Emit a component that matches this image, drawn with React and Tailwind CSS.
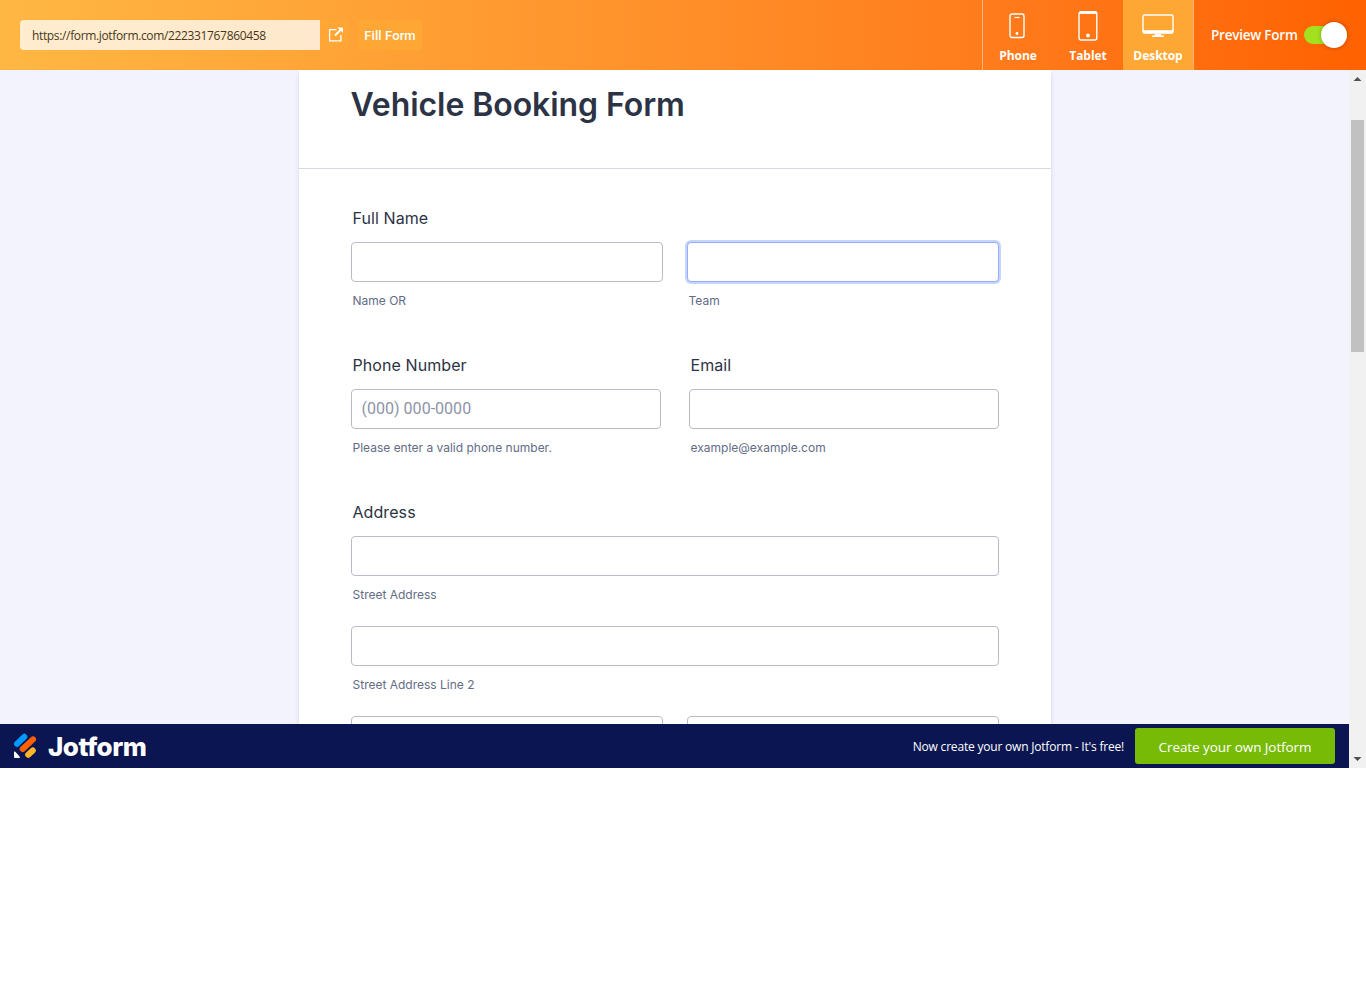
import React from "react";

function Field({ width, sub, placeholder, focused }) {
  return (
    <div className={width}>
      <div
        className={
          "flex h-10 items-center rounded-[4px] border bg-white px-[10px] text-base text-[#8d94a8] " +
          (focused
            ? "border-[#91aeff] ring-2 ring-[#c7d5fe]"
            : "border-[#b8bbcc]")
        }
      >
        {placeholder && <span className="font-['Roboto',sans-serif] tracking-[0.02px]">{placeholder}</span>}
      </div>
      <div className="mt-[11px] flex h-4 items-center pl-[2px] text-[12px] leading-4 text-[#626c87]">{sub}</div>
    </div>
  );
}

function Label({ children }) {
  return <div className="mb-3 flex h-6 items-center pl-[2px] text-base leading-6 tracking-[0.08px] text-[#2c3345]">{children}</div>;
}

function Device({ label, active, children }) {
  return (
    <div className={"flex h-full flex-col items-center text-white " + (active ? "w-[70px] bg-[#ffa734]" : "w-[70px]")}>
      <div className="flex h-[52px] w-full items-center justify-center">{children}</div>
      <span className="-mt-[4px] text-[12px] font-bold leading-4 tracking-[-0.04px] whitespace-nowrap">{label}</span>
    </div>
  );
}

function Header() {
  return (
    <header className="flex h-[70px] w-full shrink-0 items-center bg-linear-to-r from-[#ffb743] to-[#ff6100] pl-5 font-['Open_Sans',sans-serif]">
      <div className="flex h-[30px] w-[300px] items-center rounded-l-[4px] bg-white/75 pl-3 text-[12px] tracking-[-0.35px] text-[#473619]">
        <span className="pt-px">https://form.jotform.com/222331767860458</span>
      </div>
      <div className="flex h-[30px] w-[30px] items-center justify-center bg-[#ffa734]/50">
        <svg width="16" height="16" viewBox="0 0 16 16" fill="none" className="ml-px">
          <path d="M8.5 2.6H1.6v11.3h11.3V8" stroke="#fff" strokeWidth="1.3" />
          <path d="M7 8.5 12.5 3" stroke="#fff" strokeWidth="2" />
          <path d="M9.5.4H15v5.5z" fill="#fff" />
        </svg>
      </div>
      <div className="ml-2 flex h-[30px] w-16 items-center justify-center rounded-[2px] bg-[#ffa734] pt-px font-['Roboto',sans-serif] text-[13px] font-medium tracking-[0.1px] whitespace-nowrap text-white">
        Fill Form
      </div>
      <nav className="ml-auto flex h-full border-x border-white/45">
        <Device label="Phone">
          <svg width="16" height="26" viewBox="0 0 16 26" fill="none" stroke="#fff" className="mr-[2px]">
            <rect x="1" y="1" width="14" height="23.5" rx="2" strokeWidth="1.4" />
            <path d="M5.5 4.5h5" strokeWidth="1.2" />
            <circle cx="8" cy="20.5" r="1.4" fill="#fff" stroke="none" />
          </svg>
        </Device>
        <Device label="Tablet">
          <svg width="20" height="30" viewBox="0 0 20 30" fill="none" stroke="#fff">
            <rect x="1" y="0.8" width="17.8" height="28.2" rx="2" strokeWidth="1.4" />
            <path d="M1.5 1.8h17" strokeWidth="2.2" />
            <circle cx="10" cy="24.5" r="1.9" fill="#fff" stroke="none" />
          </svg>
        </Device>
        <Device label="Desktop" active>
          <svg width="32" height="24" viewBox="0 0 32 24" fill="none" stroke="#fff" className="mr-px">
            <rect x="1" y="1" width="30" height="18" rx="1.5" strokeWidth="1.4" />
            <path d="M1 17.7h30" strokeWidth="3" />
            <path d="M13 20h6l.6 1.5H22v1.4H10v-1.4h2.4z" fill="#fff" stroke="none" />
          </svg>
        </Device>
      </nav>
      <div className="flex h-full w-[172px] items-center pl-[17px] text-[13.5px] font-semibold tracking-[-0.23px] whitespace-nowrap text-white">
        <span className="w-[93px]">Preview Form</span>
        <div className="flex h-[18px] w-[43px] items-center justify-end rounded-full bg-[#a3e120]">
          <div className="size-[26px] shrink-0 rounded-full bg-white shadow-[0_0_4px_rgba(0,0,0,.3)]" />
        </div>
      </div>
    </header>
  );
}

function Form() {
  return (
    <main className="flex min-h-0 flex-1 justify-center overflow-hidden bg-[#f3f3fe] font-['Inter',sans-serif]">
      <div className="h-[800px] w-[752px] shrink-0 bg-white shadow-[0_4px_4px_rgba(87,100,126,.21)]">
        <div className="h-[99px] border-b border-[#d7d8e1] pl-[52px] pt-[15px]">
          <h1 className="text-[32px] font-semibold leading-[40px] tracking-[-0.07px] text-[#2c3345]">Vehicle Booking Form</h1>
        </div>
        <div className="px-[52px] pt-[37px]">
          <Label>Full Name</Label>
          <div className="flex justify-between">
            <Field width="w-[312px]" sub="Name OR" />
            <Field width="w-[312px]" sub="Team" focused />
          </div>
          <div className="mt-11 flex justify-between">
            <div>
              <Label>Phone Number</Label>
              <Field width="w-[310px]" placeholder="(000) 000-0000" sub="Please enter a valid phone number." />
            </div>
            <div>
              <Label>Email</Label>
              <Field width="w-[310px]" sub="example@example.com" />
            </div>
          </div>
          <div className="mt-11">
            <Label>Address</Label>
            <Field width="w-full" sub="Street Address" />
            <div className="mt-[23px]">
              <Field width="w-full" sub="Street Address Line 2" />
            </div>
            <div className="mt-[23px] flex justify-between">
              <Field width="w-[312px]" />
              <Field width="w-[312px]" />
            </div>
          </div>
        </div>
      </div>
    </main>
  );
}

function Footer() {
  return (
    <footer className="flex h-11 shrink-0 items-center bg-[#0a1551] pl-[13px] pr-[14px] text-white font-['Open_Sans',sans-serif]">
      <svg width="24" height="26" viewBox="0 0 24 26" fill="none" strokeLinecap="round" strokeWidth="6">
        <path d="M4 10.8 11.3 3.8" stroke="#0099ff" />
        <path d="M9.7 16 20 6.4" stroke="#ff6100" />
        <path d="M15.2 21.8 19.8 17.5" stroke="#ffb629" />
        <path d="M1 19.2v4.2c0 1 .5 1.6 1.6 1.6h3.5c1 0 1.2-.7.5-1.4L2.3 18.8c-.7-.7-1.3-.4-1.3.4z" fill="#fff" />
      </svg>
      <span className="ml-[11px] pt-[2px] font-['Inter',sans-serif] text-[26px] font-extrabold leading-8 tracking-[-0.5px]">Jotform</span>
      <span className="ml-auto pt-[2px] text-[12px] font-medium tracking-[-0.2px] whitespace-nowrap">Now create your own Jotform - It's free!</span>
      <button className="ml-[11px] flex h-9 w-[200px] items-center justify-center rounded-[3px] bg-[#78bb07] pt-[2px] text-[13.5px] font-medium tracking-[-0.08px] whitespace-nowrap">
        Create your own Jotform
      </button>
    </footer>
  );
}

export default function App() {
  return (
    <div className="h-[984px] w-[1366px] overflow-hidden bg-white">
      <Header />
      <div className="flex h-[698px]">
        <div className="flex w-[1349px] flex-col">
          <Form />
          <Footer />
        </div>
        <div className="flex w-[17px] flex-col items-center bg-[#f1f1f1]">
          <svg width="17" height="17" viewBox="0 0 17 17"><path d="M4.5 11h8L8.5 7z" fill="#505050" /></svg>
          <div className="mt-[33px] h-[232px] w-[13px] bg-[#c1c1c1]" />
          <svg className="mt-auto" width="17" height="17" viewBox="0 0 17 17"><path d="M4.5 6h8l-4 4z" fill="#505050" /></svg>
        </div>
      </div>
    </div>
  );
}
